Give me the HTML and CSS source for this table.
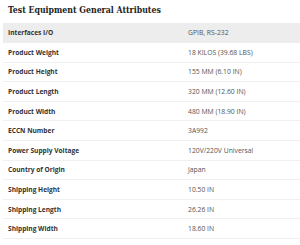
FILE: index.html
```html
<!DOCTYPE html>
<html>
<head>
<meta charset="utf-8">
<link rel="stylesheet" href="styles.css">
</head>
<body>
<div class="wrap">
  <h2 class="title">Test Equipment General Attributes</h2>
  <table class="attrs">
    <tr class="shade"><th>Interfaces I/O</th><td>GPIB, RS-232</td></tr>
    <tr><th>Product Weight</th><td>18 KILOS (39.68 LBS)</td></tr>
    <tr><th>Product Height</th><td>155 MM (6.10 IN)</td></tr>
    <tr><th>Product Length</th><td>320 MM (12.60 IN)</td></tr>
    <tr><th>Product Width</th><td>480 MM (18.90 IN)</td></tr>
    <tr><th>ECCN Number</th><td>3A992</td></tr>
    <tr><th>Power Supply Voltage</th><td>120V/220V Universal</td></tr>
    <tr><th>Country of Origin</th><td>Japan</td></tr>
    <tr><th>Shipping Height</th><td>10.50 IN</td></tr>
    <tr><th>Shipping Length</th><td>26.26 IN</td></tr>
    <tr><th>Shipping Width</th><td>18.60 IN</td></tr>
  </table>
</div>
</body>
</html>
```
FILE: styles.css
```css
html, body {
  margin: 0;
  padding: 0;
  background: #fff;
}
.wrap {
  padding: 3px 0 0 3px;
}
.title {
  margin: 0 0 5px 5px;
  font-family: "DejaVu Serif", serif;
  font-stretch: condensed;
  font-weight: bold;
  font-size: 8.7px;
  line-height: 15px;
  color: #222;
}
.attrs {
  width: 100%;
  border-collapse: collapse;
  font-family: "Open Sans", sans-serif;
  font-size: 6.6px;
}
.attrs tr {
  height: 19.6px;
  border-bottom: 1px solid #f0f0f0;
}
.attrs tr.shade {
  background: #ededed;
  border-bottom: none;
}
.attrs th {
  text-align: left;
  font-weight: bold;
  color: #333;
  padding: 0 0 0 5px;
  width: 180px;
}
.attrs td {
  color: #555;
  padding: 0;
  font-size: 6.8px;
}
```
